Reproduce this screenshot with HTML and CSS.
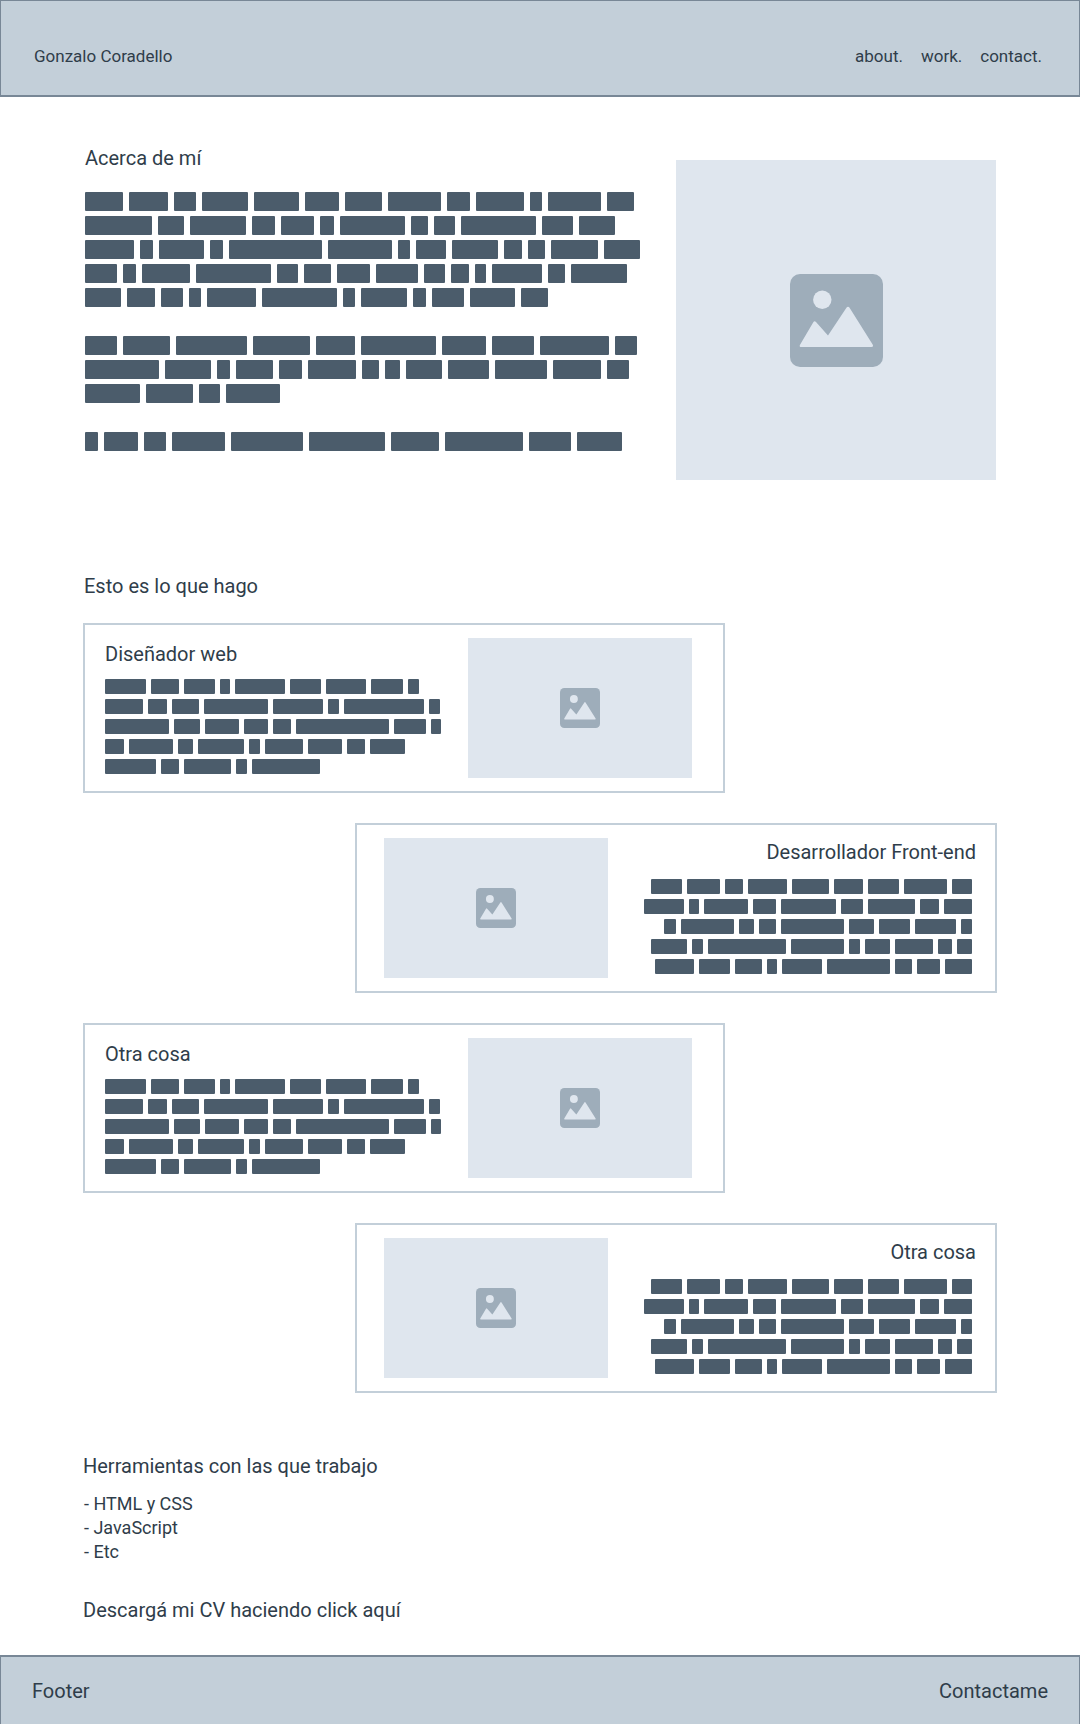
FILE: index.html
```html
<!DOCTYPE html>
<html lang="es">
<head>
  <meta charset="utf-8">
  <meta name="viewport" content="width=device-width, initial-scale=1">
  <title>Gonzalo Coradello</title>
  <link rel="stylesheet" href="styles.css">
</head>
<body>
  <svg class="sprite" aria-hidden="true">
    <symbol id="picture" viewBox="0 0 93 93">
      <rect class="frame" width="93" height="93" rx="10"/>
      <circle class="cutout" cx="32.300" cy="25.700" r="9.200"/>
      <path class="cutout" d="M9.900 71 23.300 48.200Q24.500 46.400 26 48L38 61.500 56.600 33.600Q58 31.800 59.400 33.600L82.800 70.800Q83.600 73 81.500 73H11.300Q9 73 9.900 71Z"/>
    </symbol>
  </svg>

  <header class="site-header">
    <a class="brand" href="#about">Gonzalo Coradello</a>
    <nav class="site-nav">
      <a href="#about">about.</a>
      <a href="#work">work.</a>
      <a href="#contact">contact.</a>
    </nav>
  </header>

  <main class="page">
    <section class="about" id="about">
      <div class="about-text">
        <h2>Acerca de mí</h2>
        <div class="paragraphs">
          <div class="copy" data-lines="38 39 22 46 45 34 37 53 23 48 12 53 27|67 26 56 23 33 14 65 17 21 75 31 36|49 13 45 13 93 64 12 30 46 18 17 47 36|32 13 48 75 21 27 33 42 21 18 11 50 17 56|36 28 22 12 49 75 12 46 13 32 45 27"></div>
          <div class="copy" data-lines="32 47 71 57 39 75 44 42 69 22|74 46 13 37 23 48 17 15 36 41 52 48 22|55 47 21 54"></div>
          <div class="copy" data-lines="13 34 22 53 72 76 48 78 42 45"></div>
        </div>
      </div>
      <div class="placeholder portrait"><svg><use href="#picture"/></svg></div>
    </section>

    <section class="work" id="work">
      <h2>Esto es lo que hago</h2>
      <div class="cards">
        <article class="card">
          <div class="card-text">
            <h3>Diseñador web</h3>
            <div class="copy small" data-lines="41 28 31 10 50 31 40 32 11|38 19 27 64 50 11 80 11|64 26 34 24 18 93 32 10|19 44 15 46 11 38 34 18 35|51 18 47 11 68"></div>
          </div>
          <div class="placeholder thumb"><svg><use href="#picture"/></svg></div>
        </article>
        <article class="card flipped">
          <div class="card-text">
            <h3>Desarrollador Front-end</h3>
            <div class="copy small" data-lines="31 33 18 39 37 29 31 43 20|40 10 44 23 55 22 47 19 28|12 53 15 17 63 25 31 41 11|36 11 78 53 11 25 38 14 15|39 31 27 10 40 63 17 23 27"></div>
          </div>
          <div class="placeholder thumb"><svg><use href="#picture"/></svg></div>
        </article>
        <article class="card">
          <div class="card-text">
            <h3>Otra cosa</h3>
            <div class="copy small" data-lines="41 28 31 10 50 31 40 32 11|38 19 27 64 50 11 80 11|64 26 34 24 18 93 32 10|19 44 15 46 11 38 34 18 35|51 18 47 11 68"></div>
          </div>
          <div class="placeholder thumb"><svg><use href="#picture"/></svg></div>
        </article>
        <article class="card flipped">
          <div class="card-text">
            <h3>Otra cosa</h3>
            <div class="copy small" data-lines="31 33 18 39 37 29 31 43 20|40 10 44 23 55 22 47 19 28|12 53 15 17 63 25 31 41 11|36 11 78 53 11 25 38 14 15|39 31 27 10 40 63 17 23 27"></div>
          </div>
          <div class="placeholder thumb"><svg><use href="#picture"/></svg></div>
        </article>
      </div>
    </section>

    <section class="tools">
      <h2>Herramientas con las que trabajo</h2>
      <ul class="tool-list">
        <li>- HTML y CSS</li>
        <li>- JavaScript</li>
        <li>- Etc</li>
      </ul>
      <a class="download" href="#cv">Descargá mi CV haciendo click aquí</a>
    </section>
  </main>

  <footer class="site-footer" id="contact">
    <span>Footer</span>
    <a href="#contact">Contactame</a>
  </footer>

  <script src="script.js"></script>
</body>
</html>
```
FILE: styles.css
```css
:root {
  --ink: #2f3d4a;
  --bar: #4b5c6b;
  --band: #c3cfd9;
  --band-line: #788796;
  --placeholder: #dfe6ee;
  --icon: #9eadba;
}

* {
  box-sizing: border-box;
}

body {
  margin: 0;
  background: #fff;
  color: var(--ink);
  font: 20px/24px Roboto, "Liberation Sans", sans-serif;
}

h2,
h3,
ul {
  margin: 0;
  padding: 0;
  font-size: 20px;
  font-weight: 400;
}

a {
  color: inherit;
  text-decoration: none;
}

.sprite {
  display: none;
}

.frame {
  fill: var(--icon);
}

.cutout {
  fill: var(--placeholder);
}

.site-header,
.site-footer {
  display: flex;
  justify-content: space-between;
  background: var(--band);
  border: 1px solid var(--band-line);
}

.site-header {
  padding: 43px 37px 27px 33px;
  border-bottom-width: 2px;
  font-size: 17px;
}

.site-nav {
  display: flex;
  gap: 18px;
}

.site-footer {
  padding: 22px 31px 21px;
  border-top-width: 2px;
  border-bottom: 0;
}

.page {
  padding: 49px 83px 33px;
}

.about {
  display: flex;
  justify-content: space-between;
  gap: 24px;
  padding: 0 1px 0 2px;
}

.paragraphs {
  display: grid;
  gap: 29px;
  margin-top: 22px;
}

/* Greeked text: each line is a row of word-length bars */
.copy {
  display: flex;
  flex-direction: column;
  gap: 5px;
}

.line {
  display: flex;
  gap: 6px;
}

.word {
  height: 19px;
  border-radius: 1px;
  background: var(--bar);
}

.small .line {
  gap: 5px;
}

.small .word {
  height: 15px;
}

.placeholder {
  display: grid;
  place-items: center;
  flex: none;
  background: var(--placeholder);
}

.portrait {
  width: 320px;
  height: 320px;
  margin-top: 14px;
}

.portrait svg {
  width: 93px;
  height: 93px;
}

.thumb {
  width: 224px;
  height: 140px;
}

.thumb svg {
  width: 40px;
  height: 40px;
}

.work {
  margin-top: 94px;
}

.work h2 {
  padding-left: 1px;
}

.cards {
  display: grid;
  gap: 30px;
  margin-top: 25px;
}

.card {
  display: flex;
  justify-content: space-between;
  width: 100%;
  max-width: 642px;
  padding: 13px 31px 13px 20px;
  border: 2px solid var(--band);
}

.card-text {
  padding-top: 4px;
}

.card .copy {
  margin-top: 13px;
}

.flipped {
  flex-direction: row-reverse;
  justify-self: end;
  padding: 13px 19px 13px 27px;
  text-align: right;
}

.flipped .card-text {
  padding-top: 2px;
}

.flipped .copy {
  margin-top: 15px;
  padding-right: 4px;
}

.flipped .line {
  justify-content: flex-end;
}

.tools {
  display: flex;
  flex-direction: column;
  align-items: flex-start;
  margin-top: 61px;
}

.tool-list {
  margin: 14px 0 34px;
  padding-left: 1px;
  font-size: 18px;
  list-style: none;
}
```
FILE: script.js
```js
// Draws each block of greeked text from its word widths: "|" parts lines, spaces part words.
document.querySelectorAll(".copy").forEach((copy) => {
  copy.dataset.lines.split("|").forEach((widths) => {
    const line = document.createElement("div");
    line.className = "line";
    widths.split(" ").forEach((width) => {
      const word = document.createElement("span");
      word.className = "word";
      word.style.width = `${width}px`;
      line.append(word);
    });
    copy.append(line);
  });
});
```
